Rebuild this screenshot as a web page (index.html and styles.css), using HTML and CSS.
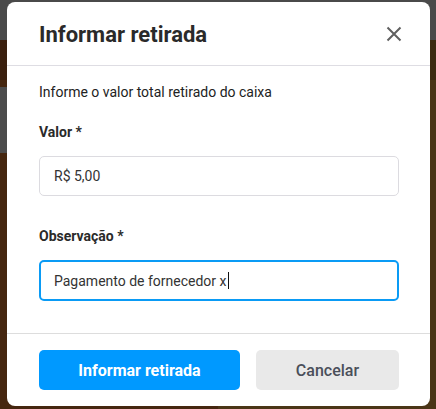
FILE: index.html
```html
<!DOCTYPE html>
<html>
<head>
    <meta charset="UTF-8">
    <title>Informar retirada</title>
    <link rel="stylesheet" href="styles.css">
</head>
<body>
    <div class="backdrop">
        <div class="modal">
            <div class="modal-header">
                <h2 class="modal-title">Informar retirada</h2>
                <button class="modal-close" type="button" aria-label="Fechar">
                    <svg width="16" height="16" viewBox="0 0 16 16">
                        <path d="M1.5 1.5 L14.5 14.5 M14.5 1.5 L1.5 14.5" stroke="#606060" stroke-width="2" fill="none"/>
                    </svg>
                </button>
            </div>

            <div class="modal-body">
                <p class="modal-text">Informe o valor total retirado do caixa</p>

                <div class="form-group">
                    <label for="valor">Valor *</label>
                    <input type="text" id="valor" value="R$ 5,00">
                </div>

                <div class="form-group">
                    <label for="obs">Observação *</label>
                    <div class="input focused">Pagamento de fornecedor x<span class="caret"></span></div>
                </div>
            </div>

            <div class="modal-footer">
                <button class="btn btn-primary" type="button">Informar retirada</button>
                <button class="btn btn-secondary" type="button">Cancelar</button>
            </div>
        </div>
    </div>
</body>
</html>
```

FILE: styles.css
```css
* {
    margin: 0;
    padding: 0;
    box-sizing: border-box;
}

body {
    font-family: Roboto, 'Liberation Sans', sans-serif;
    color: #222;
    height: 409px;
    overflow: hidden;
    background:
        linear-gradient(to bottom, #4a4a4a 0 40px, #3a1f0e 40px 80px, #45260f 80px 87px, #4c4c4c 87px 153px, #45260f 153px) left top / 50% 100% no-repeat,
        linear-gradient(to bottom, #4a4a4a 0 40px, #3b2a10 40px 80px, #4a3516 80px) right top / 50% 100% no-repeat;
}

.backdrop {
    padding: 2px 6px 0 7px;
}

.modal {
    background: white;
    border-radius: 8px;
    height: 404px;
    display: flex;
    flex-direction: column;
}

.modal-header {
    height: 64px;
    padding: 0 26px 0 32px;
    display: flex;
    justify-content: space-between;
    align-items: center;
    border-bottom: 1px solid #dedde3;
}

.modal-title {
    font-size: 22px;
    font-weight: 700;
    color: #2a2a2a;
    padding-top: 2px;
}

.modal-close {
    background: none;
    border: none;
    width: 20px;
    height: 20px;
    display: flex;
    align-items: center;
    justify-content: center;
    cursor: pointer;
}

.modal-body {
    padding: 16px 31px 0 32px;
    flex: 1;
    border-bottom: 1px solid #dddddd;
}

.modal-text {
    font-size: 14px;
    line-height: 20px;
    margin-bottom: 20px;
}

.form-group {
    margin-bottom: 30px;
}

label {
    display: block;
    font-size: 14px;
    font-weight: 700;
    line-height: 20px;
    color: #2a2a2a;
    margin-bottom: 14px;
}

input[type="text"],
.input {
    display: flex;
    align-items: center;
    width: 100%;
    height: 40px;
    padding: 0 14px;
    border: 1px solid #dcdbe0;
    border-radius: 5px;
    font-family: inherit;
    font-size: 14px;
    color: #333;
    background: white;
}

.input.focused {
    border: 2px solid #0a9bf5;
    padding: 0 13px;
    height: 41px;
}

.caret {
    display: inline-block;
    width: 1px;
    height: 17px;
    background: #111;
    margin-left: 1px;
}

.modal-footer {
    height: 72px;
    padding: 16px 31px 0 32px;
    display: flex;
    gap: 16px;
    align-items: flex-start;
}

.btn {
    height: 40px;
    border: none;
    border-radius: 5px;
    font-family: inherit;
    font-size: 16px;
    cursor: pointer;
}

.btn-primary {
    width: 201px;
    background: #0099ff;
    color: white;
    font-weight: 700;
}

.btn-secondary {
    flex: 1;
    background: #e9e9e9;
    color: #4a4f5a;
    font-weight: 500;
}
```
